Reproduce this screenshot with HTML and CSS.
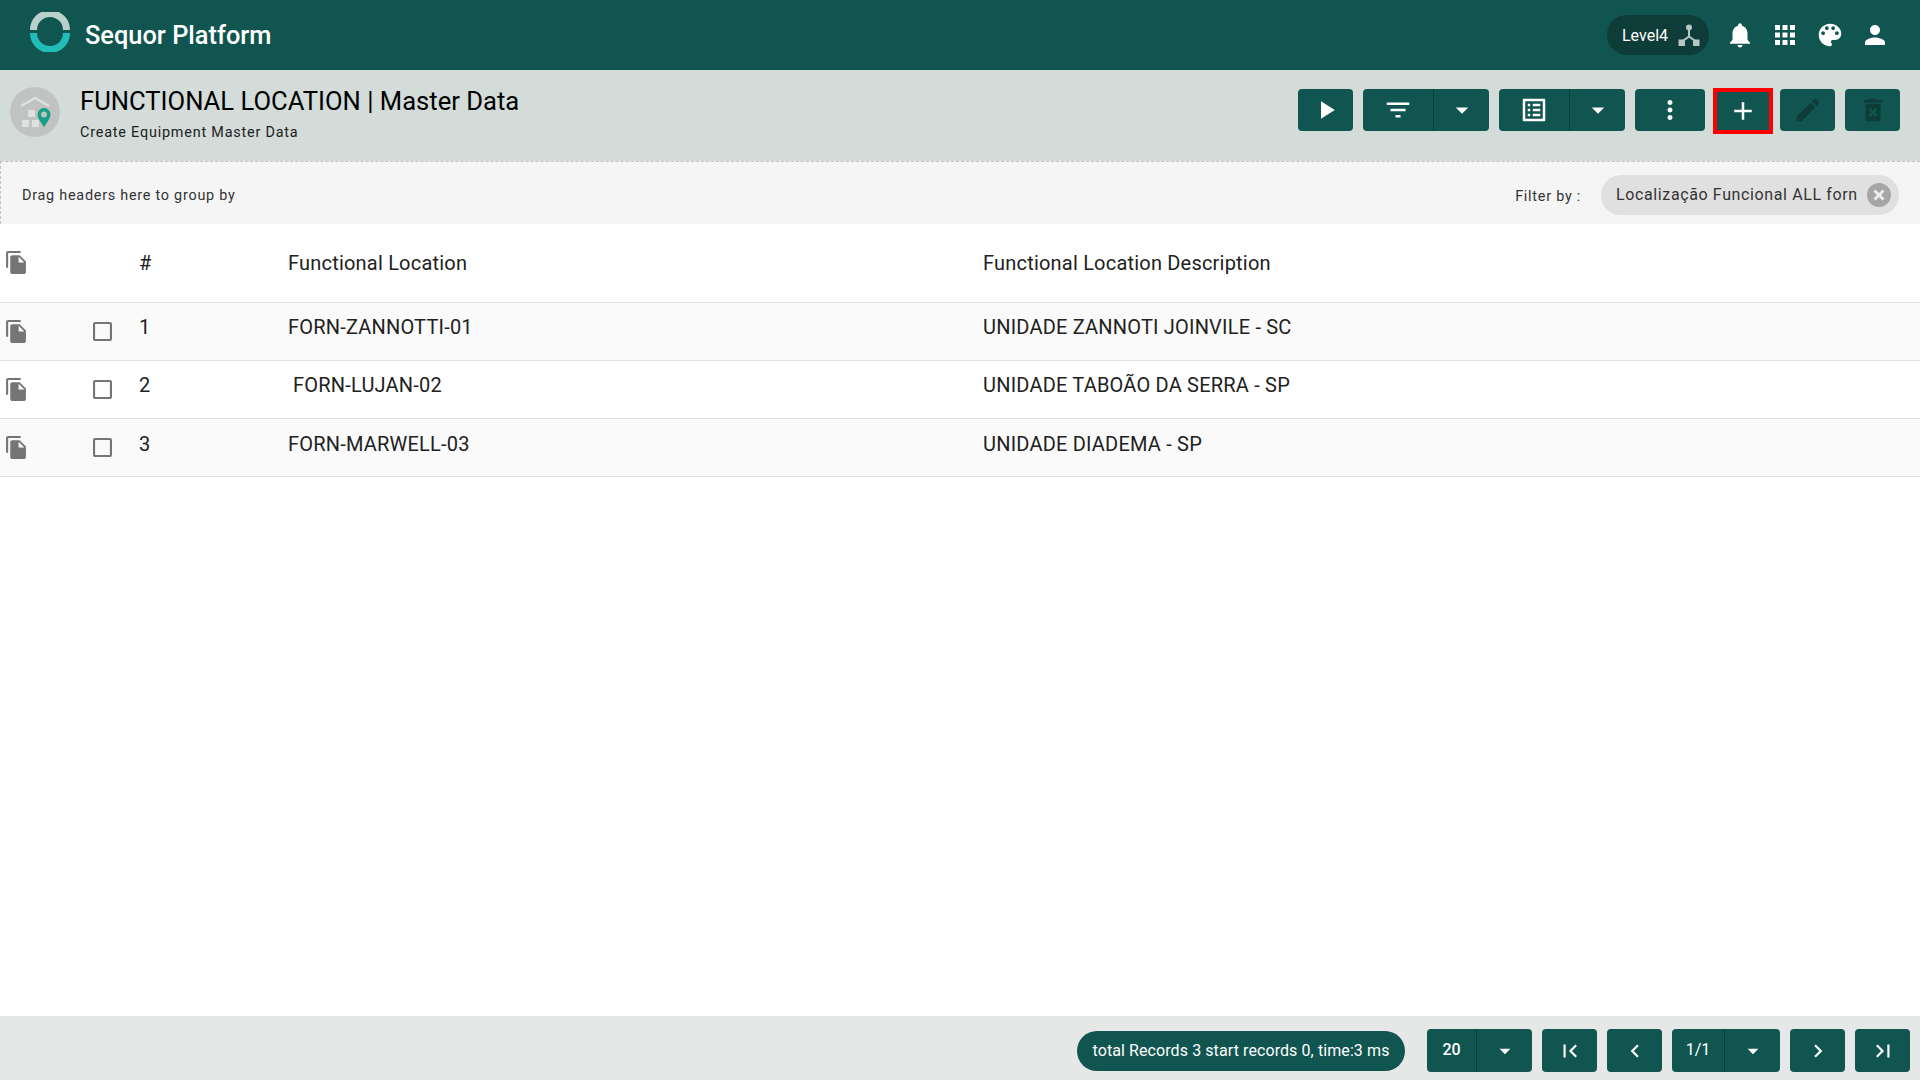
FILE: index.html
```html
<!DOCTYPE html>
<html lang="en">
<head>
    <meta charset="UTF-8">
    <title>Sequor Platform</title>
    <link rel="stylesheet" href="styles.css">
</head>
<body>
    <svg class="defs" width="0" height="0">
        <symbol id="i-copy" viewBox="2 1 19 22"><path d="M16 1H4c-1.1 0-2 .9-2 2v14h2V3h12V1zm-1 4l6 6v10c0 1.1-.9 2-2 2H7.99C6.89 23 6 22.1 6 21l.01-14c0-1.1.89-2 1.99-2h7zm-1 7h5.5L14 6.5V12z"/></symbol>
        <symbol id="i-check" viewBox="3 3 18 18"><path d="M19 5v14H5V5h14m0-2H5c-1.1 0-2 .9-2 2v14c0 1.1.9 2 2 2h14c1.1 0 2-.9 2-2V5c0-1.1-.9-2-2-2z"/></symbol>
        <symbol id="i-drop" viewBox="0 0 24 24"><path d="M7 10l5 5 5-5z"/></symbol>
    </svg>

    <main class="page">
        <header class="topbar">
            <svg class="logo" viewBox="0 0 40 40">
                <path d="M3.5 18A16.5 16.5 0 0 1 36.5 18" fill="none" stroke="#b9d0cd" stroke-width="7"/>
                <path d="M3.5 21A16.5 16.5 0 0 0 36.5 21" fill="none" stroke="#22bdb6" stroke-width="7"/>
            </svg>
            <span class="brand">Sequor Platform</span>
            <div class="topbar-right">
                <div class="level">
                    <span>Level4</span>
                    <svg class="level-icon" viewBox="0 0 24 24">
                        <circle cx="12" cy="4.500" r="3"/>
                        <rect x="1.500" y="16.500" width="6.500" height="6.500"/>
                        <rect x="16" y="16.500" width="6.500" height="6.500"/>
                        <path d="M12 6v7.500L5 18.500M12 13.500l7 5" fill="none" stroke="#b9c6c4" stroke-width="2"/>
                    </svg>
                </div>
                <svg class="top-icon" viewBox="0 0 24 24"><path d="M12 22c1.1 0 2-.9 2-2h-4c0 1.1.89 2 2 2zm6-6v-5c0-3.07-1.64-5.64-4.5-6.32V4c0-.83-.67-1.5-1.5-1.5s-1.5.67-1.5 1.5v.68C7.63 5.36 6 7.92 6 11v5l-2 2v1h16v-1l-2-2z"/></svg>
                <svg class="top-icon" viewBox="0 0 24 24"><path d="M4 8h4V4H4v4zm6 12h4v-4h-4v4zm-6 0h4v-4H4v4zm0-6h4v-4H4v4zm6 0h4v-4h-4v4zm6-10v4h4V4h-4zm-6 4h4V4h-4v4zm6 6h4v-4h-4v4zm0 6h4v-4h-4v4z"/></svg>
                <svg class="top-icon" viewBox="0 0 24 24"><path d="M12 3c-4.97 0-9 4.03-9 9s4.03 9 9 9c.83 0 1.5-.67 1.5-1.5 0-.39-.15-.74-.39-1.01-.23-.26-.38-.61-.38-.99 0-.83.67-1.5 1.5-1.5H16c2.76 0 5-2.24 5-5 0-4.42-4.03-8-9-8zm-5.5 9c-.83 0-1.5-.67-1.5-1.5S5.67 9 6.5 9 8 9.67 8 10.5 7.33 12 6.5 12zm3-4C8.67 8 8 7.33 8 6.5S8.67 5 9.5 5s1.5.67 1.5 1.5S10.33 8 9.5 8zm5 0c-.83 0-1.5-.67-1.5-1.5S13.67 5 14.5 5s1.5.67 1.5 1.5S15.33 8 14.5 8zm3 4c-.83 0-1.5-.67-1.5-1.5S16.67 9 17.5 9s1.5.67 1.5 1.5-.67 1.5-1.5 1.5z"/></svg>
                <svg class="top-icon" viewBox="0 0 24 24"><path d="M12 12c2.21 0 4-1.79 4-4s-1.79-4-4-4-4 1.79-4 4 1.79 4 4 4zm0 2c-2.67 0-8 1.34-8 4v2h16v-2c0-2.66-5.33-4-8-4z"/></svg>
            </div>
        </header>

        <section class="subbar">
            <svg class="page-icon" viewBox="0 0 50 50">
                <circle cx="25" cy="25" r="25" fill="#c1c3c3"/>
                <path d="M11 19l14-8 14 8" fill="none" stroke="#dfe1e1" stroke-width="2.5"/>
                <rect x="18" y="23" width="7" height="7" fill="#dfe1e1"/>
                <rect x="12" y="33" width="7" height="7" fill="#dfe1e1"/>
                <rect x="22" y="33" width="7" height="7" fill="#dfe1e1"/>
                <path d="M34 21a6.500 6.500 0 0 0-6.500 6.500c0 4 6.500 12.500 6.500 12.500s6.500-8.500 6.500-12.500A6.500 6.500 0 0 0 34 21zm0 9.500a3 3 0 1 1 0-6 3 3 0 0 1 0 6z" fill="#14a083"/>
            </svg>
            <div class="titles">
                <h1>FUNCTIONAL LOCATION | Master Data</h1>
                <p>Create Equipment Master Data</p>
            </div>
            <div class="toolbar">
                <button class="btn"><svg viewBox="0 0 24 24"><path d="M8 5v14l11-7z"/></svg></button>
                <div class="btn-group btn-group-wide">
                    <button class="btn"><svg viewBox="0 0 24 24"><path d="M10 18h4v-2h-4v2zM3 6v2h18V6H3zm3 7h12v-2H6v2z"/></svg></button>
                    <button class="btn btn-drop"><svg viewBox="0 0 24 24"><use href="#i-drop"/></svg></button>
                </div>
                <div class="btn-group btn-group-wide">
                    <button class="btn"><svg viewBox="0 0 24 24"><path d="M19 5v14H5V5h14m1.100-2H3.900c-.5 0-.9.4-.9.9v16.200c0 .4.4.9.9.9h16.200c.4 0 .9-.5.9-.9V3.900c0-.5-.5-.9-.9-.9zM11 7h6v2h-6V7zm0 4h6v2h-6v-2zm0 4h6v2h-6zM7 7h2v2H7zm0 4h2v2H7zm0 4h2v2H7z"/></svg></button>
                    <button class="btn btn-drop"><svg viewBox="0 0 24 24"><use href="#i-drop"/></svg></button>
                </div>
                <button class="btn btn-more"><svg viewBox="0 0 24 24"><path d="M12 8c1.100 0 2-.9 2-2s-.9-2-2-2-2 .9-2 2 .9 2 2 2zm0 2c-1.100 0-2 .9-2 2s.9 2 2 2 2-.9 2-2-.9-2-2-2zm0 6c-1.100 0-2 .9-2 2s.9 2 2 2 2-.9 2-2-.9-2-2-2z"/></svg></button>
                <button class="btn btn-add"><svg viewBox="0 0 24 24"><path d="M19 13h-6v6h-2v-6H5v-2h6V5h2v6h6v2z"/></svg></button>
                <button class="btn btn-off"><svg viewBox="0 0 24 24"><path d="M3 17.250V21h3.750L17.810 9.940l-3.750-3.750L3 17.250zM20.710 7.040c.39-.39.39-1.020 0-1.410l-2.340-2.340c-.39-.39-1.020-.39-1.410 0l-1.830 1.830 3.750 3.750 1.830-1.830z"/></svg></button>
                <button class="btn btn-off"><svg viewBox="0 0 24 24"><path d="M6 19c0 1.100.9 2 2 2h8c1.100 0 2-.9 2-2V7H6v12zm2.460-7.120l1.410-1.410L12 12.590l2.120-2.120 1.410 1.410L13.410 14l2.120 2.120-1.410 1.410L12 15.410l-2.120 2.120-1.410-1.410L10.590 14l-2.130-2.120zM15.500 4l-1-1h-5l-1 1H5v2h14V4z"/></svg></button>
            </div>
        </section>

        <section class="groupbar">
            <span class="drag-hint">Drag headers here to group by</span>
            <span class="filter-label">Filter by :</span>
            <div class="chip">
                <span class="chip-text">Localização Funcional ALL forn</span>
                <span class="chip-close"><svg viewBox="0 0 24 24"><path d="M6.500 8.500L8.500 6.500 12 10 15.500 6.500 17.500 8.500 14 12 17.500 15.500 15.500 17.500 12 14 8.500 17.500 6.500 15.500 10 12z"/></svg></span>
            </div>
        </section>

        <section class="grid">
            <div class="grid-row grid-head">
                <svg class="copy"><use href="#i-copy"/></svg>
                <span></span>
                <span>#</span>
                <span>Functional Location</span>
                <span>Functional Location Description</span>
            </div>
            <div class="grid-row grid-odd">
                <svg class="copy"><use href="#i-copy"/></svg>
                <svg class="check"><use href="#i-check"/></svg>
                <span>1</span>
                <span>FORN-ZANNOTTI-01</span>
                <span>UNIDADE ZANNOTI JOINVILE - SC</span>
            </div>
            <div class="grid-row">
                <svg class="copy"><use href="#i-copy"/></svg>
                <svg class="check"><use href="#i-check"/></svg>
                <span>2</span>
                <span class="indent">FORN-LUJAN-02</span>
                <span>UNIDADE TABOÃO DA SERRA - SP</span>
            </div>
            <div class="grid-row grid-odd grid-last">
                <svg class="copy"><use href="#i-copy"/></svg>
                <svg class="check"><use href="#i-check"/></svg>
                <span>3</span>
                <span>FORN-MARWELL-03</span>
                <span>UNIDADE DIADEMA - SP</span>
            </div>
        </section>

        <footer class="pager">
            <div class="records">total Records 3 start records 0, time:3 ms</div>
            <div class="btn-group pager-size">
                <button class="btn pager-num">20</button>
                <button class="btn pager-drop"><svg viewBox="0 0 24 24"><use href="#i-drop"/></svg></button>
            </div>
            <button class="btn pager-btn"><svg viewBox="0 0 24 24"><path d="M18.410 16.590L13.820 12l4.590-4.590L17 6l-6 6 6 6zM6 6h2v12H6z"/></svg></button>
            <button class="btn pager-btn"><svg viewBox="0 0 24 24"><path d="M15.410 7.410L14 6l-6 6 6 6 1.410-1.410L10.830 12z"/></svg></button>
            <div class="btn-group pager-page">
                <button class="btn pager-num pager-light">1/1</button>
                <button class="btn pager-drop"><svg viewBox="0 0 24 24"><use href="#i-drop"/></svg></button>
            </div>
            <button class="btn pager-btn"><svg viewBox="0 0 24 24"><path d="M10 6L8.590 7.410 13.170 12l-4.580 4.580L10 18l6-6z"/></svg></button>
            <button class="btn pager-btn"><svg viewBox="0 0 24 24"><path d="M5.590 7.410L10.180 12l-4.590 4.590L7 18l6-6-6-6zM16 6h2v12h-2z"/></svg></button>
        </footer>
    </main>
</body>
</html>
```

FILE: styles.css
```css
*{
    box-sizing: border-box;
}
body{
    margin: 0;
    font-family: Roboto, "Liberation Sans", sans-serif;
    color: #212121;
    background-color: #fff;
}
.defs{
    display: block;
    height: 0;
}
.page{
    display: flex;
    flex-direction: column;
    height: 100vh;
    overflow: hidden;
}

/* top bar */
.topbar{
    display: flex;
    align-items: center;
    flex: 0 0 70px;
    padding: 0 30px;
    background-color: #115550;
}
.logo{
    width: 40px;
    height: 40px;
    margin-top: -6px;
}
.brand{
    margin-left: 15px;
    font-size: 25.4px;
    font-weight: 500;
    color: #fff;
}
.topbar-right{
    display: flex;
    align-items: center;
    margin-left: auto;
    margin-right: -7px;
}
.level{
    display: flex;
    align-items: center;
    justify-content: space-between;
    width: 102px;
    height: 40px;
    margin-right: 8px;
    padding: 0 8px 0 15px;
    border-radius: 20px;
    background-color: #0d3c39;
    font-size: 16px;
    color: #fff;
}
.level-icon{
    width: 24px;
    height: 24px;
    fill: #b9c6c4;
}
.top-icon{
    width: 30px;
    height: 30px;
    margin: 0 7.5px;
    fill: #fff;
}

/* title bar */
.subbar{
    display: flex;
    flex: 0 0 91px;
    padding-left: 10px;
    background-color: #d3dcd9;
}
.page-icon{
    width: 50px;
    height: 50px;
    margin-top: 17px;
}
.titles{
    margin-left: 20px;
    padding-top: 16px;
}
h1{
    margin: 0;
    font-size: 25.6px;
    font-weight: 400;
    line-height: 30px;
    color: #000;
}
.titles p{
    margin: 8px 0 0;
    font-size: 14.4px;
    line-height: 18px;
    letter-spacing: 0.8px;
    color: #212121;
}
.toolbar{
    display: flex;
    gap: 10px;
    height: 42px;
    margin-left: auto;
    margin-top: 19px;
    margin-right: 20px;
}
.btn{
    display: flex;
    align-items: center;
    justify-content: center;
    width: 55px;
    height: 100%;
    padding: 0;
    border: 0;
    border-radius: 4px;
    background-color: #115550;
    color: #fff;
    font-family: inherit;
}
.btn svg{
    width: 30px;
    height: 30px;
    fill: #fff;
}
.btn-group{
    display: flex;
    height: 100%;
}
.btn-group .btn{
    border-radius: 4px 0 0 4px;
}
.btn-group .btn + .btn{
    border-left: 1px solid #0d3c39;
    border-radius: 0 4px 4px 0;
}
.btn-group-wide .btn{
    width: 70px;
}
.btn-group-wide .btn-drop{
    width: 56px;
}
.btn-more{
    width: 70px;
}
.btn-add{
    position: relative;
    width: 60px;
    height: 46px;
    margin: -1px -3px -3px -2px;
    border: 4px solid #f00;
    border-radius: 0;
}
.btn-off svg{
    fill: #0d3c39;
}

/* group by bar */
.groupbar{
    display: flex;
    align-items: center;
    flex: 0 0 63px;
    padding: 4px 21px 0;
    border-top: 1px dashed #c4c4c4;
    border-left: 1px dashed #c4c4c4;
    background-color: #f5f5f5;
    font-size: 14.4px;
    letter-spacing: 0.75px;
}
.drag-hint{
    color: #333;
}
.filter-label{
    margin-left: auto;
    margin-top: 2px;
    color: #333;
}
.chip{
    display: flex;
    align-items: center;
    justify-content: space-between;
    width: 298px;
    height: 40px;
    margin-left: 20px;
    margin-right: 0;
    padding: 0 8px 0 15px;
    border-radius: 20px;
    background-color: #e0e0e0;
    font-size: 16px;
    letter-spacing: 0.62px;
    color: #333;
}
.chip-text{
    padding-bottom: 2px;
}
.chip-close{
    display: flex;
    align-items: center;
    justify-content: center;
    width: 24px;
    height: 24px;
    border-radius: 50%;
    background-color: #a6a6a6;
}
.chip-close svg{
    width: 24px;
    height: 24px;
    fill: #eee;
}

/* table */
.grid{
    flex: 1;
}
.grid-row{
    display: grid;
    grid-template-columns: 93px 46px 149px 695px 1fr;
    align-items: start;
    height: 58px;
    padding-top: 15px;
    border-bottom: 1px solid #e0e0e0;
    font-size: 20px;
    line-height: 24px;
    letter-spacing: 0.2px;
    color: #212121;
}
.grid-head{
    height: 79px;
    padding-top: 27px;
}
.grid-odd{
    background-color: #fafafa;
}
.indent{
    padding-left: 5px;
}
.copy{
    width: 20px;
    height: 23px;
    margin-left: 6px;
    margin-top: 2px;
    fill: #757575;
}
.grid-head .copy{
    margin-top: 0;
}
.check{
    width: 19px;
    height: 19px;
    margin-top: 4px;
    fill: #757575;
}
.grid-row:not(.grid-head) span{
    margin-top: -3px;
}
.grid-row.grid-last span{
    margin-top: -2px;
}

/* pager */
.pager{
    display: flex;
    align-items: center;
    justify-content: flex-end;
    flex: 0 0 64px;
    gap: 10px;
    padding: 5px 10px 0 0;
    background-color: #e6e8e8;
}
.pager .btn svg{
    width: 26px;
    height: 26px;
}
.pager .btn{
    height: 43px;
    font-size: 16px;
    font-weight: 500;
}
.pager .btn-group{
    height: 43px;
}
.records{
    display: flex;
    align-items: center;
    justify-content: center;
    width: 328px;
    height: 40px;
    margin-right: 12px;
    border-radius: 20px;
    background-color: #115550;
    font-size: 16px;
    letter-spacing: 0.09px;
    color: #fff;
}
.pager-btn{
    width: 55px;
}
.btn-group .pager-num{
    width: 49px;
    padding-bottom: 3px;
}
.btn-group .pager-light{
    width: 52px;
    font-weight: 400;
}
.btn-group .pager-drop{
    width: 56px;
}
```
